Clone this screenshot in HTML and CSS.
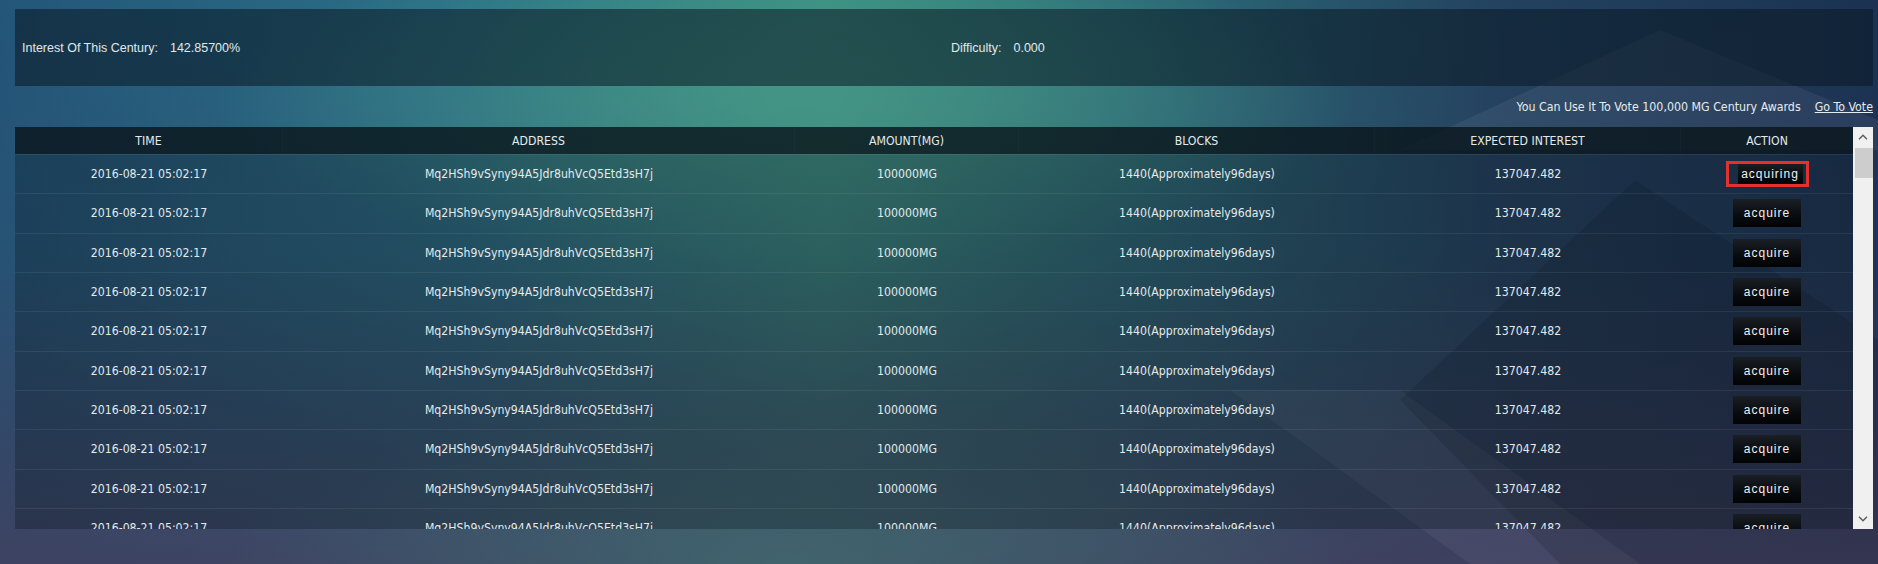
FILE: index.html
```html
<!DOCTYPE html>
<html lang="en">
<head>
<meta charset="utf-8">
<title>Century Awards</title>
<link rel="stylesheet" href="styles.css">
</head>
<body>
<div class="page">
  <section class="stats">
    <div class="stat"><span class="label">Interest Of This Century:</span><span class="value">142.85700%</span></div>
    <div class="stat"><span class="label">Difficulty:</span><span class="value">0.000</span></div>
  </section>
  <div class="vote"><span>You Can Use It To Vote 100,000 MG Century Awards</span><a href="#">Go To Vote</a></div>
  <div class="table-wrap">
    <div class="table">
      <div class="row head">
        <div class="cell">TIME</div><div class="cell">ADDRESS</div><div class="cell">AMOUNT(MG)</div><div class="cell">BLOCKS</div><div class="cell">EXPECTED INTEREST</div><div class="cell">ACTION</div>
      </div>
      <div class="row">
        <div class="cell">2016-08-21 05:02:17</div><div class="cell">Mq2HSh9vSyny94A5Jdr8uhVcQ5Etd3sH7j</div><div class="cell">100000MG</div><div class="cell">1440(Approximately96days)</div><div class="cell">137047.482</div><div class="cell"><span class="marked"><button class="btn small">acquiring</button></span></div>
      </div>
      <div class="row">
        <div class="cell">2016-08-21 05:02:17</div><div class="cell">Mq2HSh9vSyny94A5Jdr8uhVcQ5Etd3sH7j</div><div class="cell">100000MG</div><div class="cell">1440(Approximately96days)</div><div class="cell">137047.482</div><div class="cell"><button class="btn">acquire</button></div>
      </div>
      <div class="row">
        <div class="cell">2016-08-21 05:02:17</div><div class="cell">Mq2HSh9vSyny94A5Jdr8uhVcQ5Etd3sH7j</div><div class="cell">100000MG</div><div class="cell">1440(Approximately96days)</div><div class="cell">137047.482</div><div class="cell"><button class="btn">acquire</button></div>
      </div>
      <div class="row">
        <div class="cell">2016-08-21 05:02:17</div><div class="cell">Mq2HSh9vSyny94A5Jdr8uhVcQ5Etd3sH7j</div><div class="cell">100000MG</div><div class="cell">1440(Approximately96days)</div><div class="cell">137047.482</div><div class="cell"><button class="btn">acquire</button></div>
      </div>
      <div class="row">
        <div class="cell">2016-08-21 05:02:17</div><div class="cell">Mq2HSh9vSyny94A5Jdr8uhVcQ5Etd3sH7j</div><div class="cell">100000MG</div><div class="cell">1440(Approximately96days)</div><div class="cell">137047.482</div><div class="cell"><button class="btn">acquire</button></div>
      </div>
      <div class="row">
        <div class="cell">2016-08-21 05:02:17</div><div class="cell">Mq2HSh9vSyny94A5Jdr8uhVcQ5Etd3sH7j</div><div class="cell">100000MG</div><div class="cell">1440(Approximately96days)</div><div class="cell">137047.482</div><div class="cell"><button class="btn">acquire</button></div>
      </div>
      <div class="row">
        <div class="cell">2016-08-21 05:02:17</div><div class="cell">Mq2HSh9vSyny94A5Jdr8uhVcQ5Etd3sH7j</div><div class="cell">100000MG</div><div class="cell">1440(Approximately96days)</div><div class="cell">137047.482</div><div class="cell"><button class="btn">acquire</button></div>
      </div>
      <div class="row">
        <div class="cell">2016-08-21 05:02:17</div><div class="cell">Mq2HSh9vSyny94A5Jdr8uhVcQ5Etd3sH7j</div><div class="cell">100000MG</div><div class="cell">1440(Approximately96days)</div><div class="cell">137047.482</div><div class="cell"><button class="btn">acquire</button></div>
      </div>
      <div class="row">
        <div class="cell">2016-08-21 05:02:17</div><div class="cell">Mq2HSh9vSyny94A5Jdr8uhVcQ5Etd3sH7j</div><div class="cell">100000MG</div><div class="cell">1440(Approximately96days)</div><div class="cell">137047.482</div><div class="cell"><button class="btn">acquire</button></div>
      </div>
      <div class="row">
        <div class="cell">2016-08-21 05:02:17</div><div class="cell">Mq2HSh9vSyny94A5Jdr8uhVcQ5Etd3sH7j</div><div class="cell">100000MG</div><div class="cell">1440(Approximately96days)</div><div class="cell">137047.482</div><div class="cell"><button class="btn">acquire</button></div>
      </div>
    </div>
    <div class="scrollbar">
      <div class="sb-btn"><svg width="10" height="6" viewBox="0 0 10 6"><path d="M1 5.2 L5 1.2 L9 5.2" fill="none" stroke="#5a5a5a" stroke-width="1.4"/></svg></div>
      <div class="sb-track"><div class="sb-thumb"></div></div>
      <div class="sb-btn"><svg width="10" height="6" viewBox="0 0 10 6"><path d="M1 0.8 L5 4.8 L9 0.8" fill="none" stroke="#5a5a5a" stroke-width="1.4"/></svg></div>
    </div>
  </div>
</div>
</body>
</html>
```
FILE: styles.css
```css
html, body {
  margin: 0;
  height: 564px;
  overflow: hidden;
}

body {
  font-family: "DejaVu Sans Condensed", "DejaVu Sans", sans-serif;
  font-size: 12.2px;
  color: #e4eaec;
  background-color: #2a5a70;
  background-image: url("data:image/svg+xml,<svg xmlns='http://www.w3.org/2000/svg' width='1878' height='564' viewBox='0 0 1878 564' preserveAspectRatio='none'><defs><linearGradient id='a' x1='0' y1='0' x2='1' y2='0'><stop offset='0' stop-color='%23235679'/><stop offset='0.25' stop-color='%232c7087'/><stop offset='0.44' stop-color='%233b8c81'/><stop offset='0.62' stop-color='%232b6876'/><stop offset='0.8' stop-color='%23234260'/><stop offset='1' stop-color='%231b3252'/></linearGradient><linearGradient id='b' x1='0' y1='0' x2='0' y2='1'><stop offset='0' stop-color='%233d3b5a' stop-opacity='0'/><stop offset='0.45' stop-color='%233d3b5a' stop-opacity='0.15'/><stop offset='1' stop-color='%23423f5e' stop-opacity='0.85'/></linearGradient><radialGradient id='c' cx='0.42' cy='0.18' r='0.3'><stop offset='0' stop-color='%2348a08a' stop-opacity='0.75'/><stop offset='1' stop-color='%2348a08a' stop-opacity='0'/></radialGradient><radialGradient id='d' cx='0.42' cy='1' r='0.3'><stop offset='0' stop-color='%23406a70' stop-opacity='0.8'/><stop offset='1' stop-color='%23406a70' stop-opacity='0'/></radialGradient></defs><rect width='1878' height='564' fill='url(%23a)'/><rect width='1878' height='564' fill='url(%23c)'/><rect width='1878' height='564' fill='url(%23b)'/><rect width='1878' height='564' fill='url(%23d)'/><polygon points='1660,30 1400,150 1878,150 1878,120' fill='%23ffffff' fill-opacity='0.06'/><polygon points='1230,390 1400,390 1640,564 1470,564' fill='%23ffffff' fill-opacity='0.05'/><polygon points='1635,180 1400,400 1560,564 1878,564 1878,340' fill='%23000000' fill-opacity='0.12'/></svg>");
  background-size: 1878px 564px;
  background-repeat: no-repeat;
}

.page {
  padding: 9px 5px 0 15px;
}

.stats {
  height: 77px;
  display: flex;
  align-items: center;
  background: rgba(10, 24, 34, 0.55);
}

.stat {
  flex: 1;
  padding-left: 7px;
  font-family: "Liberation Sans", "DejaVu Sans", sans-serif;
  font-size: 12.5px;
  color: #e2e8ea;
}

.stat .value {
  margin-left: 12px;
}

.vote {
  height: 41px;
  display: flex;
  align-items: center;
  justify-content: flex-end;
  gap: 14px;
  font-size: 12.3px;
  color: #e6ecee;
}

.vote a {
  color: #e6ecee;
  text-decoration: underline;
}

.table-wrap {
  display: flex;
  height: 402px;
}

.table {
  flex: 1;
  overflow: hidden;
}

.row {
  display: grid;
  grid-template-columns: 268px 512px 224px 356px 306px 1fr;
  align-items: center;
  height: 39.33px;
  box-sizing: border-box;
  border-top: 1px solid rgba(255, 255, 255, 0.07);
  background: rgba(8, 20, 28, 0.3);
}

.row.head {
  height: 27px;
  border-top: none;
  background: rgba(10, 22, 28, 0.82);
  align-items: stretch;
}

.row.head .cell {
  display: flex;
  align-items: center;
  justify-content: center;
  border-right: 1px solid rgba(255, 255, 255, 0.02);
}

.row.head .cell:last-child {
  border-right: none;
}

.cell {
  text-align: center;
  white-space: nowrap;
}

.btn {
  width: 68px;
  height: 28px;
  padding: 0;
  border: none;
  background: linear-gradient(to bottom, #1a1f25 0%, #080b0f 60%, #020304 100%);
  color: #eef2f4;
  font-family: "Liberation Sans", sans-serif;
  font-size: 12px;
  letter-spacing: 1px;
  vertical-align: middle;
}

.btn.small {
  width: 65px;
  height: 20px;
}

.marked {
  display: inline-flex;
  align-items: center;
  border: 3px solid #e5312e;
  padding: 0 3px 0 9px;
  vertical-align: middle;
}

.scrollbar {
  width: 20px;
  display: flex;
  flex-direction: column;
  background: #f0f0f0;
}

.sb-btn {
  height: 20px;
  display: flex;
  align-items: center;
  justify-content: center;
}

.sb-track {
  flex: 1;
  padding: 1px 0 0 2px;
}

.sb-thumb {
  height: 30px;
  background: #cdcdcd;
}
```
